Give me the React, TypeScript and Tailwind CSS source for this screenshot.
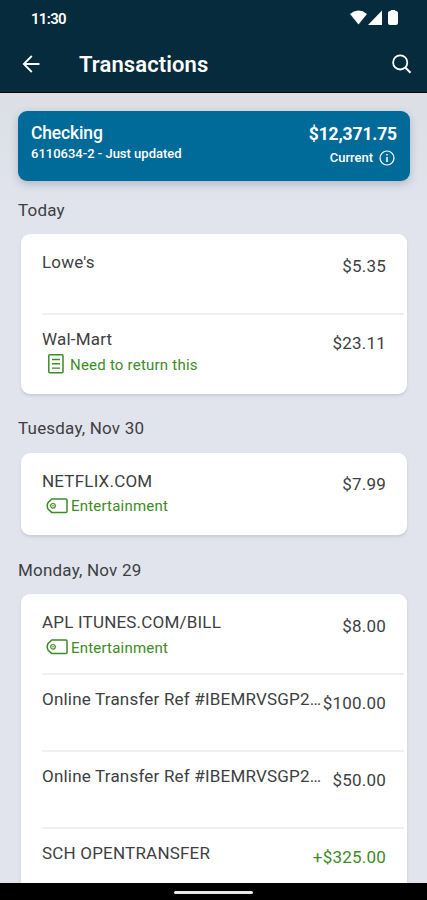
import * as React from "react";

type Transaction = {
  name: string;
  amount: string;
  note?: string;
  category?: string;
  credit?: boolean;
};

type Group = {
  day: string;
  items: Transaction[];
};

const groups: Group[] = [
  {
    day: "Today",
    items: [
      { name: "Lowe's", amount: "$5.35" },
      { name: "Wal-Mart", amount: "$23.11", note: "Need to return this" },
    ],
  },
  {
    day: "Tuesday, Nov 30",
    items: [
      { name: "NETFLIX.COM", amount: "$7.99", category: "Entertainment" },
    ],
  },
  {
    day: "Monday, Nov 29",
    items: [
      {
        name: "APL ITUNES.COM/BILL",
        amount: "$8.00",
        category: "Entertainment",
      },
      { name: "Online Transfer Ref #IBEMRVSGP2…", amount: "$100.00" },
      { name: "Online Transfer Ref #IBEMRVSGP2…", amount: "$50.00" },
      { name: "SCH OPENTRANSFER", amount: "+$325.00", credit: true },
    ],
  },
];

const NoteIcon = () => (
  <svg width="16" height="20" viewBox="0 0 16 20" fill="none" stroke="#3d8b26">
    <rect x="0.8" y="0.8" width="14.2" height="18" rx="1" strokeWidth="1.5" />
    <path d="M4 5.5h8M4 9.8h8M4 14.1h8" strokeWidth="1.4" />
  </svg>
);

const TagIcon = () => (
  <svg width="22" height="16" viewBox="0 0 22 16" fill="none" stroke="#3d8b26">
    <path
      d="M5.8 1H20a1 1 0 0 1 1 1v11.6a1 1 0 0 1-1 1H5.8L2 11Q.4 7.8 2 4.6Z"
      strokeWidth="1.5"
      strokeLinejoin="round"
    />
    <circle cx="7" cy="7.8" r="2.3" strokeWidth="1.2" />
    <circle cx="7" cy="7.8" r="0.8" fill="#3d8b26" stroke="none" />
  </svg>
);

const StatusBar = () => (
  <div className="flex h-9 items-center justify-between pr-[28px] pl-[31px]">
    <span className="pt-px text-[15px] leading-5 font-semibold tracking-[-0.7px]">
      11:30
    </span>
    <svg width="50" height="18" viewBox="0 0 50 18" fill="#fff">
      <path d="M1 5Q9.5-1.8 18 5L9.5 15.5Z" />
      <path d="M33 1.5V16H19Z" />
      <path d="M41.8 2V1h4.4v1H47q2 0 2 2v10q0 2-2 2h-6q-2 0-2-2V4q0-2 2-2Z" />
    </svg>
  </div>
);

const Header = () => (
  <header className="h-[93px] shrink-0 border-b border-black bg-[#062b3c] text-white">
    <StatusBar />
    <div className="flex h-14 items-center pr-[15px] pl-[22px]">
      <svg
        width="19"
        height="18"
        viewBox="0 0 19 18"
        fill="none"
        stroke="#fff"
        strokeWidth="1.8"
      >
        <path d="M17.5 9H2M9.8 1L1.8 9l8 8" />
      </svg>
      <h1 className="ml-[38px] flex-1 pt-[2px] text-[22px] leading-7 font-semibold tracking-[0.1px]">
        Transactions
      </h1>
      <svg
        width="20"
        height="20"
        viewBox="0 0 20 20"
        fill="none"
        stroke="#fff"
        strokeWidth="1.8"
      >
        <circle cx="8.2" cy="8.4" r="7.1" />
        <path d="M13.3 13.5l5.2 5.2" strokeWidth="2.1" />
      </svg>
    </div>
  </header>
);

const Account = () => (
  <div className="mr-[17px] ml-[18px] flex h-[70px] shrink-0 justify-between rounded-[9px] bg-[#006b98] pr-[13px] pl-[13px] text-white shadow-[0_3px_8px_rgba(60,70,90,0.28)]">
    <div className="pt-[10px]">
      <p className="text-[17.5px] leading-6 font-medium tracking-[-0.15px]">
        Checking
      </p>
      <p className="text-[13px] leading-[18px] font-medium">
        6110634-2 - Just updated
      </p>
    </div>
    <div className="pt-[11px] text-right">
      <p className="text-[17.5px] leading-6 font-bold tracking-[-0.15px]">
        $12,371.75
      </p>
      <div className="flex items-center justify-end gap-[6px] pr-[2px] text-[13px] leading-6 font-medium">
        <span>Current</span>
        <svg
          width="16"
          height="16"
          viewBox="0 0 16 16"
          fill="none"
          stroke="#fff"
          strokeWidth="1.2"
        >
          <circle cx="8" cy="8" r="7" />
          <path d="M8 7v5M8 4v1.5" strokeWidth="1.5" />
        </svg>
      </div>
    </div>
  </div>
);

const Row = ({ item }: { item: Transaction }) => (
  <li className="ml-[21px] mr-[3px] flex h-[77px] justify-between border-t-2 border-[#f0f0f0] pr-[18px] first:border-transparent">
    <div className="w-[278px] pt-[12px] whitespace-nowrap">
      <p className="text-[17px] leading-6 tracking-[0.2px]">{item.name}</p>
      {item.note && (
        <div className="flex h-[26px] items-center gap-[6px] pl-[6px] text-[#3d8b26]">
          <NoteIcon />
          <span className="pt-[2px] text-[15px] tracking-[0.22px]">
            {item.note}
          </span>
        </div>
      )}
      {item.category && (
        <div className="flex h-[26px] items-center gap-[3px] pl-[4px] text-[#3d8b26]">
          <TagIcon />
          <span className="pt-[2px] text-[15px] tracking-[0.2px]">
            {item.category}
          </span>
        </div>
      )}
    </div>
    <p
      className={
        item.credit
          ? "pt-[15.5px] text-[17px] leading-6 tracking-[0.22px] text-[#3d8b26]"
          : "pt-[15.5px] text-[17px] leading-6 tracking-[0.22px]"
      }
    >
      {item.amount}
    </p>
  </li>
);

const App = () => {
  return (
    <div className="flex h-[900px] w-full flex-col overflow-hidden bg-[#e1e4ed] font-[Roboto,sans-serif] text-[#3d3f42]">
      <Header />
      <main className="flex min-h-0 flex-1 flex-col overflow-hidden bg-linear-to-b from-[#dcdfe5] to-[#e1e4ed] to-15% pt-[18px]">
        <Account />
        {groups.map((group) => (
          <section key={group.day} className="shrink-0">
            <h2 className="h-[53px] pt-[17px] pl-[18px] text-[17px] leading-6 tracking-[0.2px] [section+section>&]:h-[59px] [section+section>&]:pt-[22.5px]">
              {group.day}
            </h2>
            <ul className="mr-5 ml-[21px] rounded-[9px] bg-white pt-[2px] pb-[3.7px] shadow-[0_2px_3px_rgba(60,70,90,0.14)]">
              {group.items.map((item, i) => (
                <Row key={i} item={item} />
              ))}
            </ul>
          </section>
        ))}
      </main>
      <footer className="flex h-[17px] shrink-0 justify-center bg-black pt-2">
        <div className="h-[3px] w-[79px] rounded-full bg-[#e8e8e8]" />
      </footer>
    </div>
  );
};

export default App;
